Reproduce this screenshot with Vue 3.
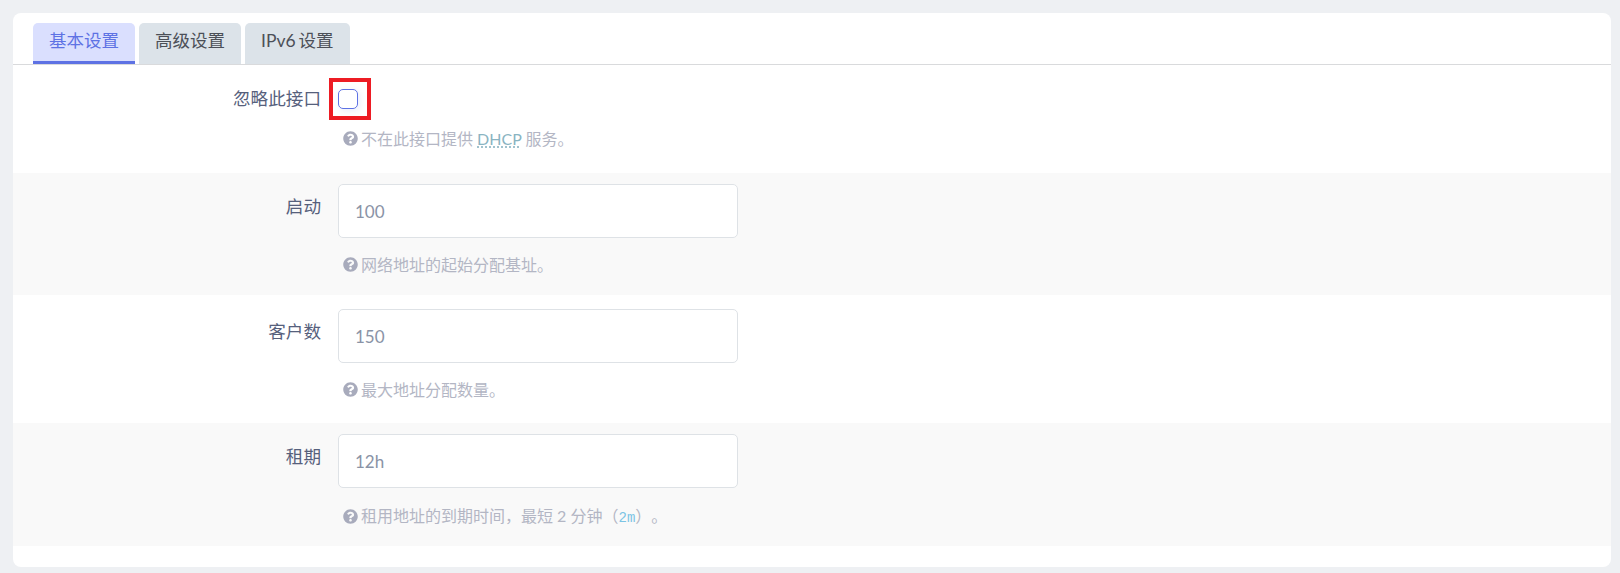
<template>
  <div class="page">
    <div class="card">
      <ul class="tabs">
        <li v-for="(tab, i) in tabs" :key="tab" class="tab" :class="{ active: i === 0 }">{{ tab }}</li>
      </ul>

      <div class="row first">
        <label class="label">忽略此接口</label>
        <div class="field">
          <div class="check-wrap">
            <span class="checkbox"></span>
          </div>
          <p class="hint">
            <svg class="help" viewBox="0 0 512 512"><path :d="helpIcon" /></svg>
            <span>不在此接口提供 <abbr class="abbr">DHCP</abbr> 服务。</span>
          </p>
        </div>
      </div>

      <div class="row alt">
        <label class="label">启动</label>
        <div class="field">
          <input class="input" value="100" />
          <p class="hint">
            <svg class="help" viewBox="0 0 512 512"><path :d="helpIcon" /></svg>
            <span>网络地址的起始分配基址。</span>
          </p>
        </div>
      </div>

      <div class="row middle">
        <label class="label">客户数</label>
        <div class="field">
          <input class="input" value="150" />
          <p class="hint">
            <svg class="help" viewBox="0 0 512 512"><path :d="helpIcon" /></svg>
            <span>最大地址分配数量。</span>
          </p>
        </div>
      </div>

      <div class="row alt last">
        <label class="label">租期</label>
        <div class="field">
          <input class="input" value="12h" />
          <p class="hint">
            <svg class="help" viewBox="0 0 512 512"><path :d="helpIcon" /></svg>
            <span>租用地址的到期时间，最短 2 分钟（<code class="code">2m</code>）。</span>
          </p>
        </div>
      </div>
    </div>
  </div>
</template>

<script setup>
const tabs = ['基本设置', '高级设置', 'IPv6 设置'];

const helpIcon =
  'M504 256c0 136.997-111.043 248-248 248S8 392.997 8 256C8 119.083 119.043 8 256 8s248 111.083 248 248zM262.655 90c-54.497 0-89.255 22.957-116.549 63.758-3.536 5.286-2.353 12.415 2.715 16.258l34.699 26.31c5.205 3.947 12.621 3.008 16.665-2.122 17.864-22.658 30.113-35.797 57.303-35.797 20.429 0 45.698 13.148 45.698 32.958 0 14.976-12.363 22.667-32.534 33.976C247.128 238.528 216 254.941 216 296v4c0 6.627 5.373 12 12 12h56c6.627 0 12-5.373 12-12v-1.333c0-28.462 83.186-29.647 83.186-106.667 0-58.002-60.165-102-116.531-102zM256 338c-25.365 0-46 20.635-46 46 0 25.364 20.635 46 46 46s46-20.636 46-46c0-25.365-20.635-46-46-46z';
</script>

<style>
html,
body {
  margin: 0;
  background: #eef0f3;
}
</style>

<style scoped>
.page {
  height: 573px;
  box-sizing: border-box;
  padding: 13px 9px 6px 13px;
  font-family: Lato, "Noto Sans CJK SC", sans-serif;
  background: #eef0f3;
}

.card {
  height: 554px;
  background: #fff;
  border-radius: 8px;
  overflow: hidden;
}

.tabs {
  display: flex;
  gap: 4px;
  margin: 0;
  padding: 10px 0 0 20px;
  list-style: none;
  height: 41px;
  border-bottom: 1px solid #d9dadc;
}

.tab {
  padding: 0 16px;
  height: 41px;
  box-sizing: border-box;
  line-height: 36px;
  font-size: 17.5px;
  word-spacing: -1.5px;
  color: #4c5058;
  background: #dce3e9;
  border-radius: 5px 5px 0 0;
}

.tab.active {
  color: #5e72e4;
  background: #dadffe;
  border-bottom: 3px solid #5e72e4;
}

.row {
  display: flex;
  height: 122px;
  box-sizing: border-box;
  padding-top: 11px;
}

.row.first {
  height: 108px;
  padding-top: 13px;
}

.row.middle {
  height: 128px;
  padding-top: 14px;
}

.row.last {
  height: 123px;
}

.row.alt {
  background: #f9f9f9;
}

.label {
  width: 308px;
  flex-shrink: 0;
  text-align: right;
  font-size: 17.6px;
  line-height: 46px;
  color: #56607c;
}

.first .label {
  line-height: 42px;
}

.field {
  margin-left: 17px;
}

.check-wrap {
  display: flex;
  align-items: center;
  width: 29px;
  height: 34px;
  padding-left: 5px;
  margin-left: -9px;
  border: 4px solid #ed1c24;
}

.checkbox {
  display: block;
  width: 20px;
  height: 20px;
  box-sizing: border-box;
  border: 1px solid #5e72e4;
  border-radius: 5px;
  box-shadow: 2px 2px 6px rgba(94, 114, 228, 0.12);
}

.input {
  display: block;
  width: 400px;
  height: 54px;
  box-sizing: border-box;
  padding: 0 16px;
  font: inherit;
  font-size: 17px;
  color: #8a93a6;
  background: #fff;
  border: 1px solid #dee2e6;
  border-radius: 5px;
  outline: none;
}

.hint {
  display: flex;
  align-items: center;
  margin: 15px 0 0 5px;
  font-size: 16px;
  line-height: 22px;
  color: #b3b6c4;
  text-spacing-trim: space-all;
}

.hint span {
  margin-top: 1px;
}

.last .hint {
  margin-top: 16px;
}

.first .hint {
  margin-top: 7px;
}

.help {
  width: 15px;
  height: 15px;
  margin-right: 3px;
  fill: #a8abbc;
}

.abbr {
  color: #8ab4c2;
  text-decoration: underline dotted;
  text-underline-offset: 2px;
}

.code {
  font-family: "Liberation Mono", monospace;
  font-size: 14px;
  color: #7cc4e4;
}
</style>
